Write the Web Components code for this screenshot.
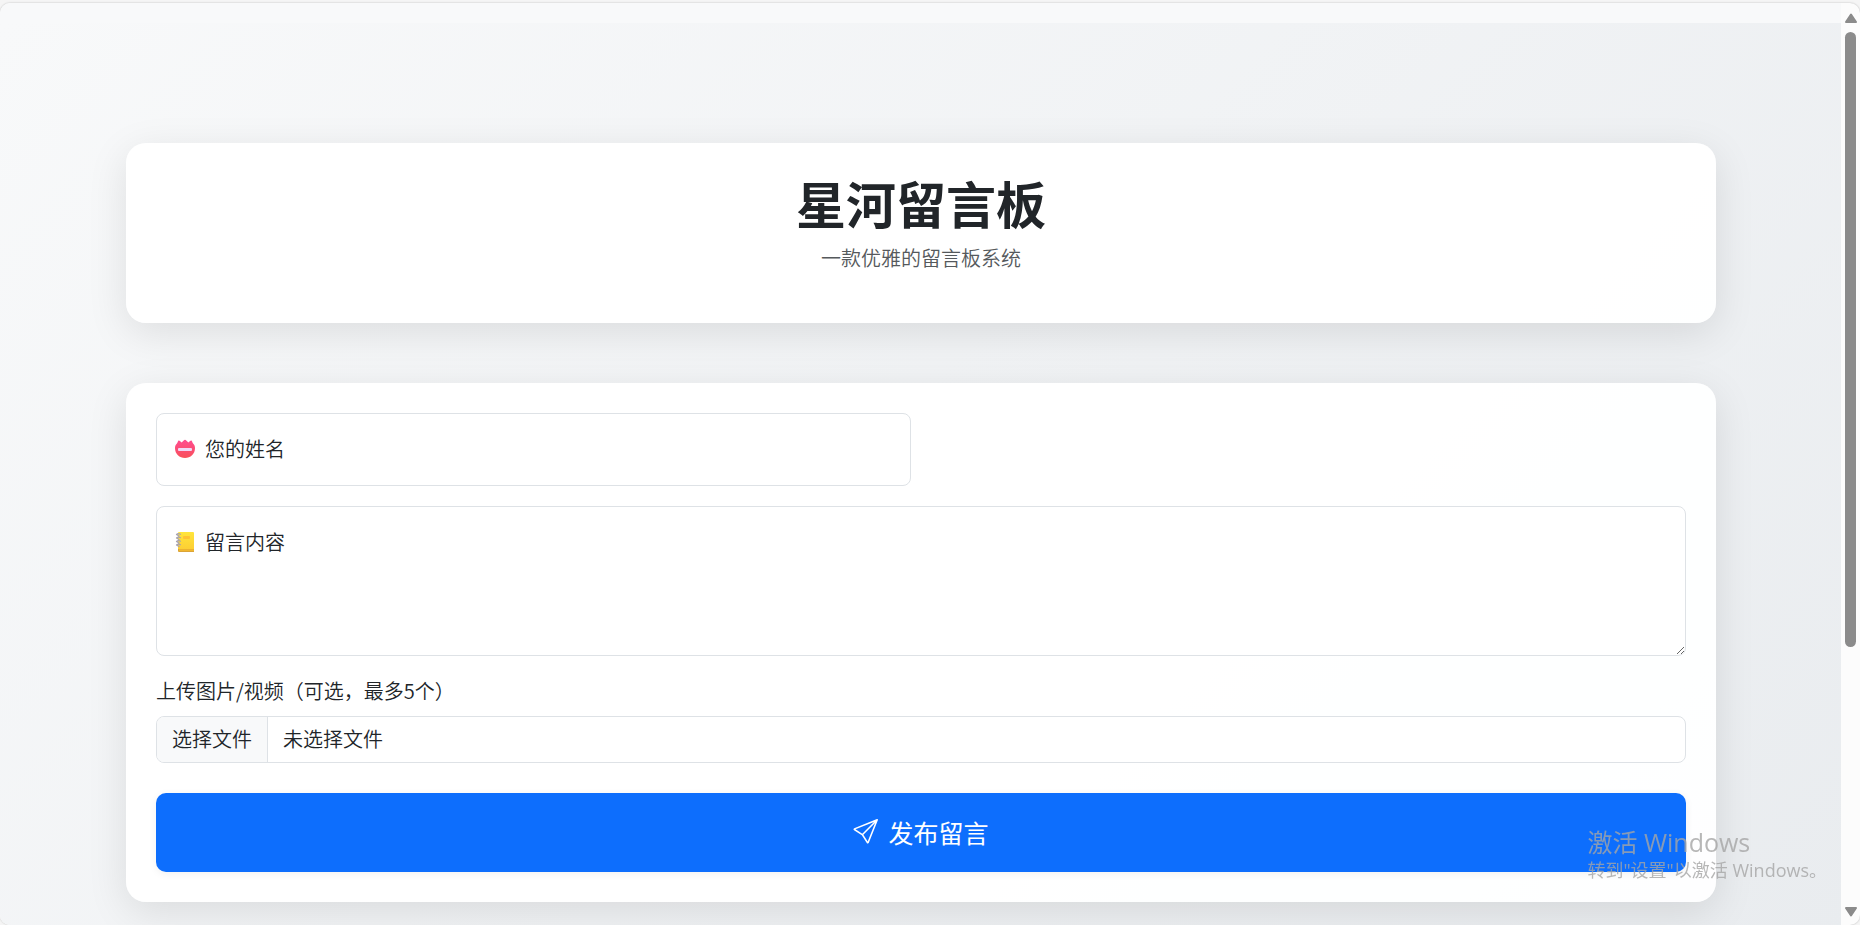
<!DOCTYPE html>
<html lang="zh-CN">
<head>
<meta charset="utf-8">
<title>星河留言板</title>
<style>
  html, body {
    height: 100%;
    margin: 0;
  }

  body {
    overflow: hidden;
    background: #f5f5f5;
    color: #212529;
    font: 350 20px/30px "Noto Sans CJK SC", sans-serif;
  }
</style>
</head>
<body>
<app-window>
  <message-board>
    <board-card>
      <board-title>
        星河留言板
        <span slot="subtitle">一款优雅的留言板系统</span>
      </board-title>
    </board-card>
    <board-card>
      <message-form></message-form>
    </board-card>
  </message-board>
</app-window>
<system-notice>
  激活 Windows
  <span slot="detail">转到"设置"以激活 Windows。</span>
</system-notice>

<script>
class BaseElement extends HTMLElement {
  constructor () {
    super()
    this.attachShadow({ mode: 'open' })
    this.shadowRoot.innerHTML = this.constructor.html
  }
}

customElements.define('app-window', class extends BaseElement {
  static html = `
<style>
  :host {
    display: block;
    box-sizing: border-box;
    height: 100vh;
    padding-top: 3px;
  }

  .frame {
    display: flex;
    height: 100%;
    overflow: hidden;
    border-radius: 10px;
    background: #fcfcfc;
    box-shadow: 0 0 2px rgba(0, 0, 0, .25);
  }

  main {
    flex: 1;
    min-width: 0;
    overflow: hidden;
    background: #f8f9fa;
  }
</style>
<div class="frame">
  <main><slot></slot></main>
  <scroll-rail></scroll-rail>
</div>
`
})

customElements.define('scroll-rail', class extends BaseElement {
  static html = `
<style>
  :host {
    display: flex;
    flex-direction: column;
    align-items: center;
    box-sizing: border-box;
    width: 19px;
    padding: 10px 0 8px;
  }

  svg {
    display: block;
    width: 12px;
    height: 10px;
    fill: #8b8b8b;
    stroke: #8b8b8b;
    stroke-width: 2;
    stroke-linejoin: round;
  }

  .track {
    flex: 1;
    width: 11px;
    margin: 9px 0;
  }

  .thumb {
    height: 71%;
    border-radius: 6px;
    background: #8b8b8b;
  }
</style>
<svg viewBox="0 0 12 10"><path d="M6 1.5 11 9H1z"/></svg>
<div class="track"><div class="thumb"></div></div>
<svg viewBox="0 0 12 10"><path d="M6 8.5 1 1h10z"/></svg>
`
})

customElements.define('message-board', class extends BaseElement {
  static html = `
<style>
  :host {
    display: flex;
    flex-direction: column;
    gap: 60px;
    box-sizing: border-box;
    min-height: 100vh;
    margin-top: 20px;
    padding: 120px 125px 0 126px;
    background: linear-gradient(135deg, #f8f9fa, #e9ecef);
  }
</style>
<slot></slot>
`
})

customElements.define('board-card', class extends BaseElement {
  static html = `
<style>
  :host {
    display: block;
    padding: 30px;
    border-radius: 20px;
    background: rgba(255, 255, 255, .95);
    box-shadow: 0 10px 40px rgba(0, 0, 0, .1);
  }
</style>
<slot></slot>
`
})

customElements.define('board-title', class extends BaseElement {
  static html = `
<style>
  :host {
    display: block;
    padding-bottom: 20px;
    text-align: center;
  }

  h1 {
    margin: 0 0 12px;
    font-size: 50px;
    font-weight: 700;
    line-height: 58px;
  }

  p {
    margin: 0;
    color: #55595c;
  }
</style>
<h1><slot></slot></h1>
<p><slot name="subtitle"></slot></p>
`
})

// Label sits in the same grid cell as the control it names
customElements.define('message-form', class extends BaseElement {
  static html = `
<style>
  :host {
    display: block;
  }

  form {
    display: grid;
    grid-template-columns: 1fr 1fr;
    gap: 20px;
  }

  .wide {
    grid-column: 1 / -1;
  }

  .floating {
    display: grid;
  }

  .floating > * {
    grid-area: 1 / 1;
  }

  .floating label {
    display: flex;
    align-self: start;
    align-items: center;
    gap: 10px;
    padding: 21px 19px;
    pointer-events: none;
  }

  .floating label svg {
    width: 20px;
    height: 20px;
  }

  input, textarea, .picker {
    box-sizing: border-box;
    width: 100%;
    margin: 0;
    border: 1px solid #dee2e6;
    border-radius: 8px;
    background: #fff;
    color: inherit;
    font: inherit;
  }

  #name {
    height: 73px;
    padding: 20px;
  }

  #content {
    display: block;
    height: 150px;
    padding: 20px;
    resize: vertical;
  }

  .floating :focus + label,
  .floating :not(:placeholder-shown) + label {
    visibility: hidden;
  }

  .caption {
    display: block;
    margin-bottom: 10px;
  }

  .picker {
    display: flex;
    position: relative;
    height: 47px;
    overflow: hidden;
    line-height: 43px;
  }

  .picker span {
    padding: 0 15px;
  }

  .picker .choose {
    border-right: 1px solid #dee2e6;
    background: #f8f9fa;
  }

  .picker input {
    position: absolute;
    inset: 0;
    height: 100%;
    opacity: 0;
  }

  button {
    display: flex;
    align-items: center;
    justify-content: center;
    gap: 10px;
    height: 79px;
    margin-top: 10px;
    padding: 0 0 2px;
    border: 0;
    border-radius: 10px;
    background: #0d6efd;
    box-shadow: 0 2px 8px rgba(0, 0, 0, .06);
    color: #fff;
    font: inherit;
    font-size: 25px;
    font-weight: 400;
  }

  button svg {
    width: 25px;
    height: 25px;
  }
</style>
<form>
  <div class="floating">
    <input id="name" type="text" placeholder=" ">
    <label for="name">
      <svg viewBox="0 0 20 20">
        <defs>
          <linearGradient id="badge" x2="0" y2="1">
            <stop stop-color="#ff4b91"/>
            <stop offset="1" stop-color="#f8505a"/>
          </linearGradient>
        </defs>
        <path fill="url(#badge)" d="M3.5 1.6C4.2.9 5.4 2.3 6.6 3.4L9.3 1q.7-.6 1.4 0l2.7 2.4C14.6 2.3 15.8.9 16.5 1.6 17.3 2.4 17.3 4 18.3 4.8 19.6 5.9 20 7.6 20 9.2 20 14.8 15.5 19 10 19S0 14.8 0 9.2C0 7.6.4 5.9 1.7 4.8 2.7 4 2.7 2.4 3.5 1.6z"/>
        <rect x="3" y="9" width="14" height="3" rx="1" fill="#efd8f7"/>
      </svg>
      您的姓名
    </label>
  </div>
  <div class="floating wide">
    <textarea id="content" placeholder=" "></textarea>
    <label for="content">
      <svg viewBox="0 0 20 20">
        <defs>
          <linearGradient id="cover" x2="0" y2="1">
            <stop stop-color="#ffe53b"/>
            <stop offset="1" stop-color="#fdcf34"/>
          </linearGradient>
        </defs>
        <path fill="#dba437" d="M3 16h16v4H4a1 1 0 0 1-1-1z"/>
        <path fill="#fbc02d" d="M4 17.5h15v1.2H4z"/>
        <path fill="url(#cover)" d="M4 0h14a1 1 0 0 1 1 1v16H3V1a1 1 0 0 1 1-1z"/>
        <rect x="8" y="4" width="7" height="3" rx="1" fill="#ffc233"/>
        <path fill="none" stroke="#a8a2b0" stroke-width="1.2" stroke-linecap="round" d="M5.5 2.2Q3 .8 1.5 2.5M5.5 5.7Q3 4.3 1.5 6M5.5 9.2Q3 7.8 1.5 9.5M5.5 12.7Q3 11.3 1.5 13M1.5 2.5 4 4M1.5 6 4 7.5M1.5 9.5 4 11M1.5 13 4 14.5"/>
      </svg>
      留言内容
    </label>
  </div>
  <div class="wide">
    <label class="caption" for="media">上传图片/视频（可选，最多5个）</label>
    <div class="picker">
      <span class="choose">选择文件</span>
      <span>未选择文件</span>
      <input id="media" type="file" accept="image/*,video/*" multiple>
    </div>
  </div>
  <button class="wide" type="submit">
    <svg viewBox="0 0 16 16" fill="#fff">
      <path d="M15.854.146a.5.5 0 0 1 .11.54l-5.819 14.547a.75.75 0 0 1-1.329.124l-3.178-4.995L.643 7.184a.75.75 0 0 1 .124-1.33L15.314.037a.5.5 0 0 1 .54.11ZM6.636 10.07l2.761 4.338L14.13 2.576zm6.787-8.201L1.591 6.602l4.339 2.76z"/>
    </svg>
    发布留言
  </button>
</form>
`

  connectedCallback () {
    this.shadowRoot.querySelector('form').addEventListener('submit', e => e.preventDefault())
  }
})

customElements.define('system-notice', class extends BaseElement {
  static html = `
<style>
  :host {
    position: fixed;
    right: 33px;
    bottom: 43px;
    color: rgba(165, 165, 165, .8);
    font-family: "Open Sans", "Noto Sans CJK SC", sans-serif;
    font-size: 18px;
    font-weight: 400;
    line-height: 24px;
    pointer-events: none;
  }

  div {
    font-size: 25px;
    line-height: 32px;
  }
</style>
<div><slot></slot></div>
<slot name="detail"></slot>
`
})
</script>
</body>
</html>
